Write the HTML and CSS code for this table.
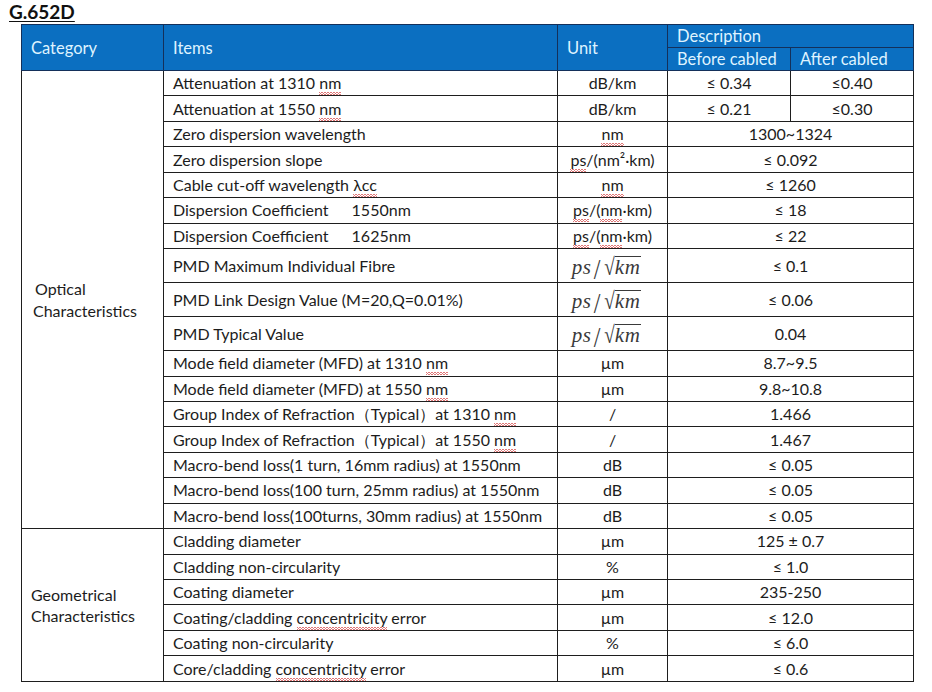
FILE: index.html
```html
<!DOCTYPE html>
<html lang="en">
<head>
    <meta charset="UTF-8">
    <meta name="viewport" content="width=device-width, initial-scale=1.0">
    <title>G.652D Fibre Specification</title>
    <link rel="stylesheet" href="styles.css">
</head>
<body>
    <h1 class="title">G.652D</h1>
    <table class="spec">
        <colgroup>
            <col class="c-cat">
            <col class="c-item">
            <col class="c-unit">
            <col class="c-val">
            <col class="c-val">
        </colgroup>
        <thead>
            <tr class="head-top">
                <th rowspan="2">Category</th>
                <th rowspan="2">Items</th>
                <th rowspan="2">Unit</th>
                <th colspan="2">Description</th>
            </tr>
            <tr class="head-sub">
                <th>Before cabled</th>
                <th>After cabled</th>
            </tr>
        </thead>
        <tbody>
            <tr>
                <td rowspan="17" class="cat"><span class="cat-a">Optical</span><br>Characteristics</td>
                <td class="item">Attenuation at 1310 <span class="sp">nm</span></td>
                <td class="unit">dB/km</td>
                <td>≤ 0.34</td>
                <td>≤0.40</td>
            </tr>
            <tr>
                <td class="item">Attenuation at 1550 <span class="sp">nm</span></td>
                <td class="unit">dB/km</td>
                <td>≤ 0.21</td>
                <td>≤0.30</td>
            </tr>
            <tr>
                <td class="item">Zero dispersion wavelength</td>
                <td class="unit"><span class="sp">nm</span></td>
                <td colspan="2">1300~1324</td>
            </tr>
            <tr>
                <td class="item">Zero dispersion slope</td>
                <td class="unit"><span class="sp">ps</span>/(nm²·km)</td>
                <td colspan="2">≤ 0.092</td>
            </tr>
            <tr>
                <td class="item">Cable cut-off wavelength <span class="sp">λcc</span></td>
                <td class="unit"><span class="sp">nm</span></td>
                <td colspan="2">≤ 1260</td>
            </tr>
            <tr>
                <td class="item">Dispersion Coefficient <span class="gap">1550nm</span></td>
                <td class="unit"><span class="sp">ps</span>/(<span class="sp">nm</span>·km)</td>
                <td colspan="2">≤ 18</td>
            </tr>
            <tr>
                <td class="item">Dispersion Coefficient <span class="gap">1625nm</span></td>
                <td class="unit"><span class="sp">ps</span>/(<span class="sp">nm</span>·km)</td>
                <td colspan="2">≤ 22</td>
            </tr>
            <tr class="tall">
                <td class="item">PMD Maximum Individual Fibre</td>
                <td class="unit"><span class="pmd"><i>ps</i><span class="slash">/</span><span class="sqrt">√</span><i class="rad">km</i></span></td>
                <td colspan="2">≤ 0.1</td>
            </tr>
            <tr class="tall">
                <td class="item">PMD Link Design Value (M=20,Q=0.01%)</td>
                <td class="unit"><span class="pmd"><i>ps</i><span class="slash">/</span><span class="sqrt">√</span><i class="rad">km</i></span></td>
                <td colspan="2">≤ 0.06</td>
            </tr>
            <tr class="tall">
                <td class="item">PMD Typical Value</td>
                <td class="unit"><span class="pmd"><i>ps</i><span class="slash">/</span><span class="sqrt">√</span><i class="rad">km</i></span></td>
                <td colspan="2">0.04</td>
            </tr>
            <tr>
                <td class="item">Mode field diameter (MFD) at 1310 <span class="sp">nm</span></td>
                <td class="unit">µm</td>
                <td colspan="2">8.7~9.5</td>
            </tr>
            <tr>
                <td class="item">Mode field diameter (MFD) at 1550 <span class="sp">nm</span></td>
                <td class="unit">µm</td>
                <td colspan="2">9.8~10.8</td>
            </tr>
            <tr>
                <td class="item">Group Index of Refraction（Typical）at 1310 <span class="sp">nm</span></td>
                <td class="unit">/</td>
                <td colspan="2">1.466</td>
            </tr>
            <tr>
                <td class="item">Group Index of Refraction（Typical）at 1550 <span class="sp">nm</span></td>
                <td class="unit">/</td>
                <td colspan="2">1.467</td>
            </tr>
            <tr>
                <td class="item">Macro-bend loss(1 turn, 16mm radius) at 1550nm</td>
                <td class="unit">dB</td>
                <td colspan="2">≤ 0.05</td>
            </tr>
            <tr>
                <td class="item">Macro-bend loss(100 turn, 25mm radius) at 1550nm</td>
                <td class="unit">dB</td>
                <td colspan="2">≤ 0.05</td>
            </tr>
            <tr>
                <td class="item">Macro-bend loss(100turns, 30mm radius) at 1550nm</td>
                <td class="unit">dB</td>
                <td colspan="2">≤ 0.05</td>
            </tr>
            <tr>
                <td rowspan="6" class="cat geo">Geometrical<br>Characteristics</td>
                <td class="item">Cladding diameter</td>
                <td class="unit">µm</td>
                <td colspan="2">125 ± 0.7</td>
            </tr>
            <tr>
                <td class="item">Cladding non-circularity</td>
                <td class="unit">%</td>
                <td colspan="2">≤ 1.0</td>
            </tr>
            <tr>
                <td class="item">Coating diameter</td>
                <td class="unit">µm</td>
                <td colspan="2">235-250</td>
            </tr>
            <tr>
                <td class="item">Coating/cladding <span class="sp">concentricity</span> error</td>
                <td class="unit">µm</td>
                <td colspan="2">≤ 12.0</td>
            </tr>
            <tr>
                <td class="item">Coating non-circularity</td>
                <td class="unit">%</td>
                <td colspan="2">≤ 6.0</td>
            </tr>
            <tr>
                <td class="item">Core/cladding <span class="sp">concentricity</span> error</td>
                <td class="unit">µm</td>
                <td colspan="2">≤ 0.6</td>
            </tr>
        </tbody>
    </table>
</body>
</html>
```

FILE: styles.css
```css
body {
    margin: 0;
    padding: 1px 8px;
    background: #ffffff;
    font-family: Lato, "Open Sans", sans-serif;
    color: #1c1c1c;
}
.title {
    margin: 0 0 2px 1px;
    font-size: 19px;
    line-height: 21px;
    font-weight: bold;
    text-decoration: underline;
    text-decoration-thickness: 1px;
    text-underline-offset: 2px;
    color: #111;
}
.spec {
    margin-left: 13px;
    border-collapse: collapse;
    table-layout: fixed;
    width: 892px;
    font-size: 16px;
}
.c-cat { width: 142px; }
.c-item { width: 394px; }
.c-unit { width: 110px; }
.c-val { width: 123px; }
.spec th,
.spec td {
    border: 1px solid #1e1e1e;
    padding: 0 9px;
    white-space: nowrap;
    text-align: center;
    line-height: 20px;
}
.spec th {
    background: #0b6fc1;
    color: #dff3ff;
    font-weight: normal;
    font-size: 16.5px;
    text-align: left;
    border-color: #14305a;
    height: 22px;
    padding: 0 9px;
}
.spec tbody tr { height: 25.45px; }
.spec tbody tr.tall { height: 34px; }
.spec td.item { text-align: left; }
.spec td.cat {
    text-align: left;
    padding-left: 11px;
    line-height: 22px;
}
.cat-a { padding-left: 2px; }
.spec td.geo { padding-left: 9px; line-height: 21px; }
.gap { margin-left: 19px; }
.sp {
    background-image:
        linear-gradient(45deg, transparent 40%, #e07878 40%, #e07878 60%, transparent 60%),
        linear-gradient(-45deg, transparent 40%, #e07878 40%, #e07878 60%, transparent 60%);
    background-size: 3px 3px;
    background-repeat: repeat-x;
    background-position: 0 100%;
    padding-bottom: 3px;
}
.pmd {
    display: inline-flex;
    align-items: flex-end;
    font-family: "Liberation Serif", serif;
    font-size: 21px;
    color: #3a3a3a;
    line-height: 24px;
    margin-right: 12px;
}
.pmd i { letter-spacing: 0.5px; }
.slash {
    font-size: 30px;
    line-height: 26px;
    margin: 0 1px 0 2px;
    transform: translateY(3px) scaleX(0.8);
}
.sqrt {
    font-size: 24px;
    line-height: 24px;
    transform: scaleX(0.8);
    margin-right: -1px;
}
.rad {
    border-top: 1px solid #3a3a3a;
    line-height: 21px;
    padding-right: 1px;
    margin-bottom: 1px;
}
```
